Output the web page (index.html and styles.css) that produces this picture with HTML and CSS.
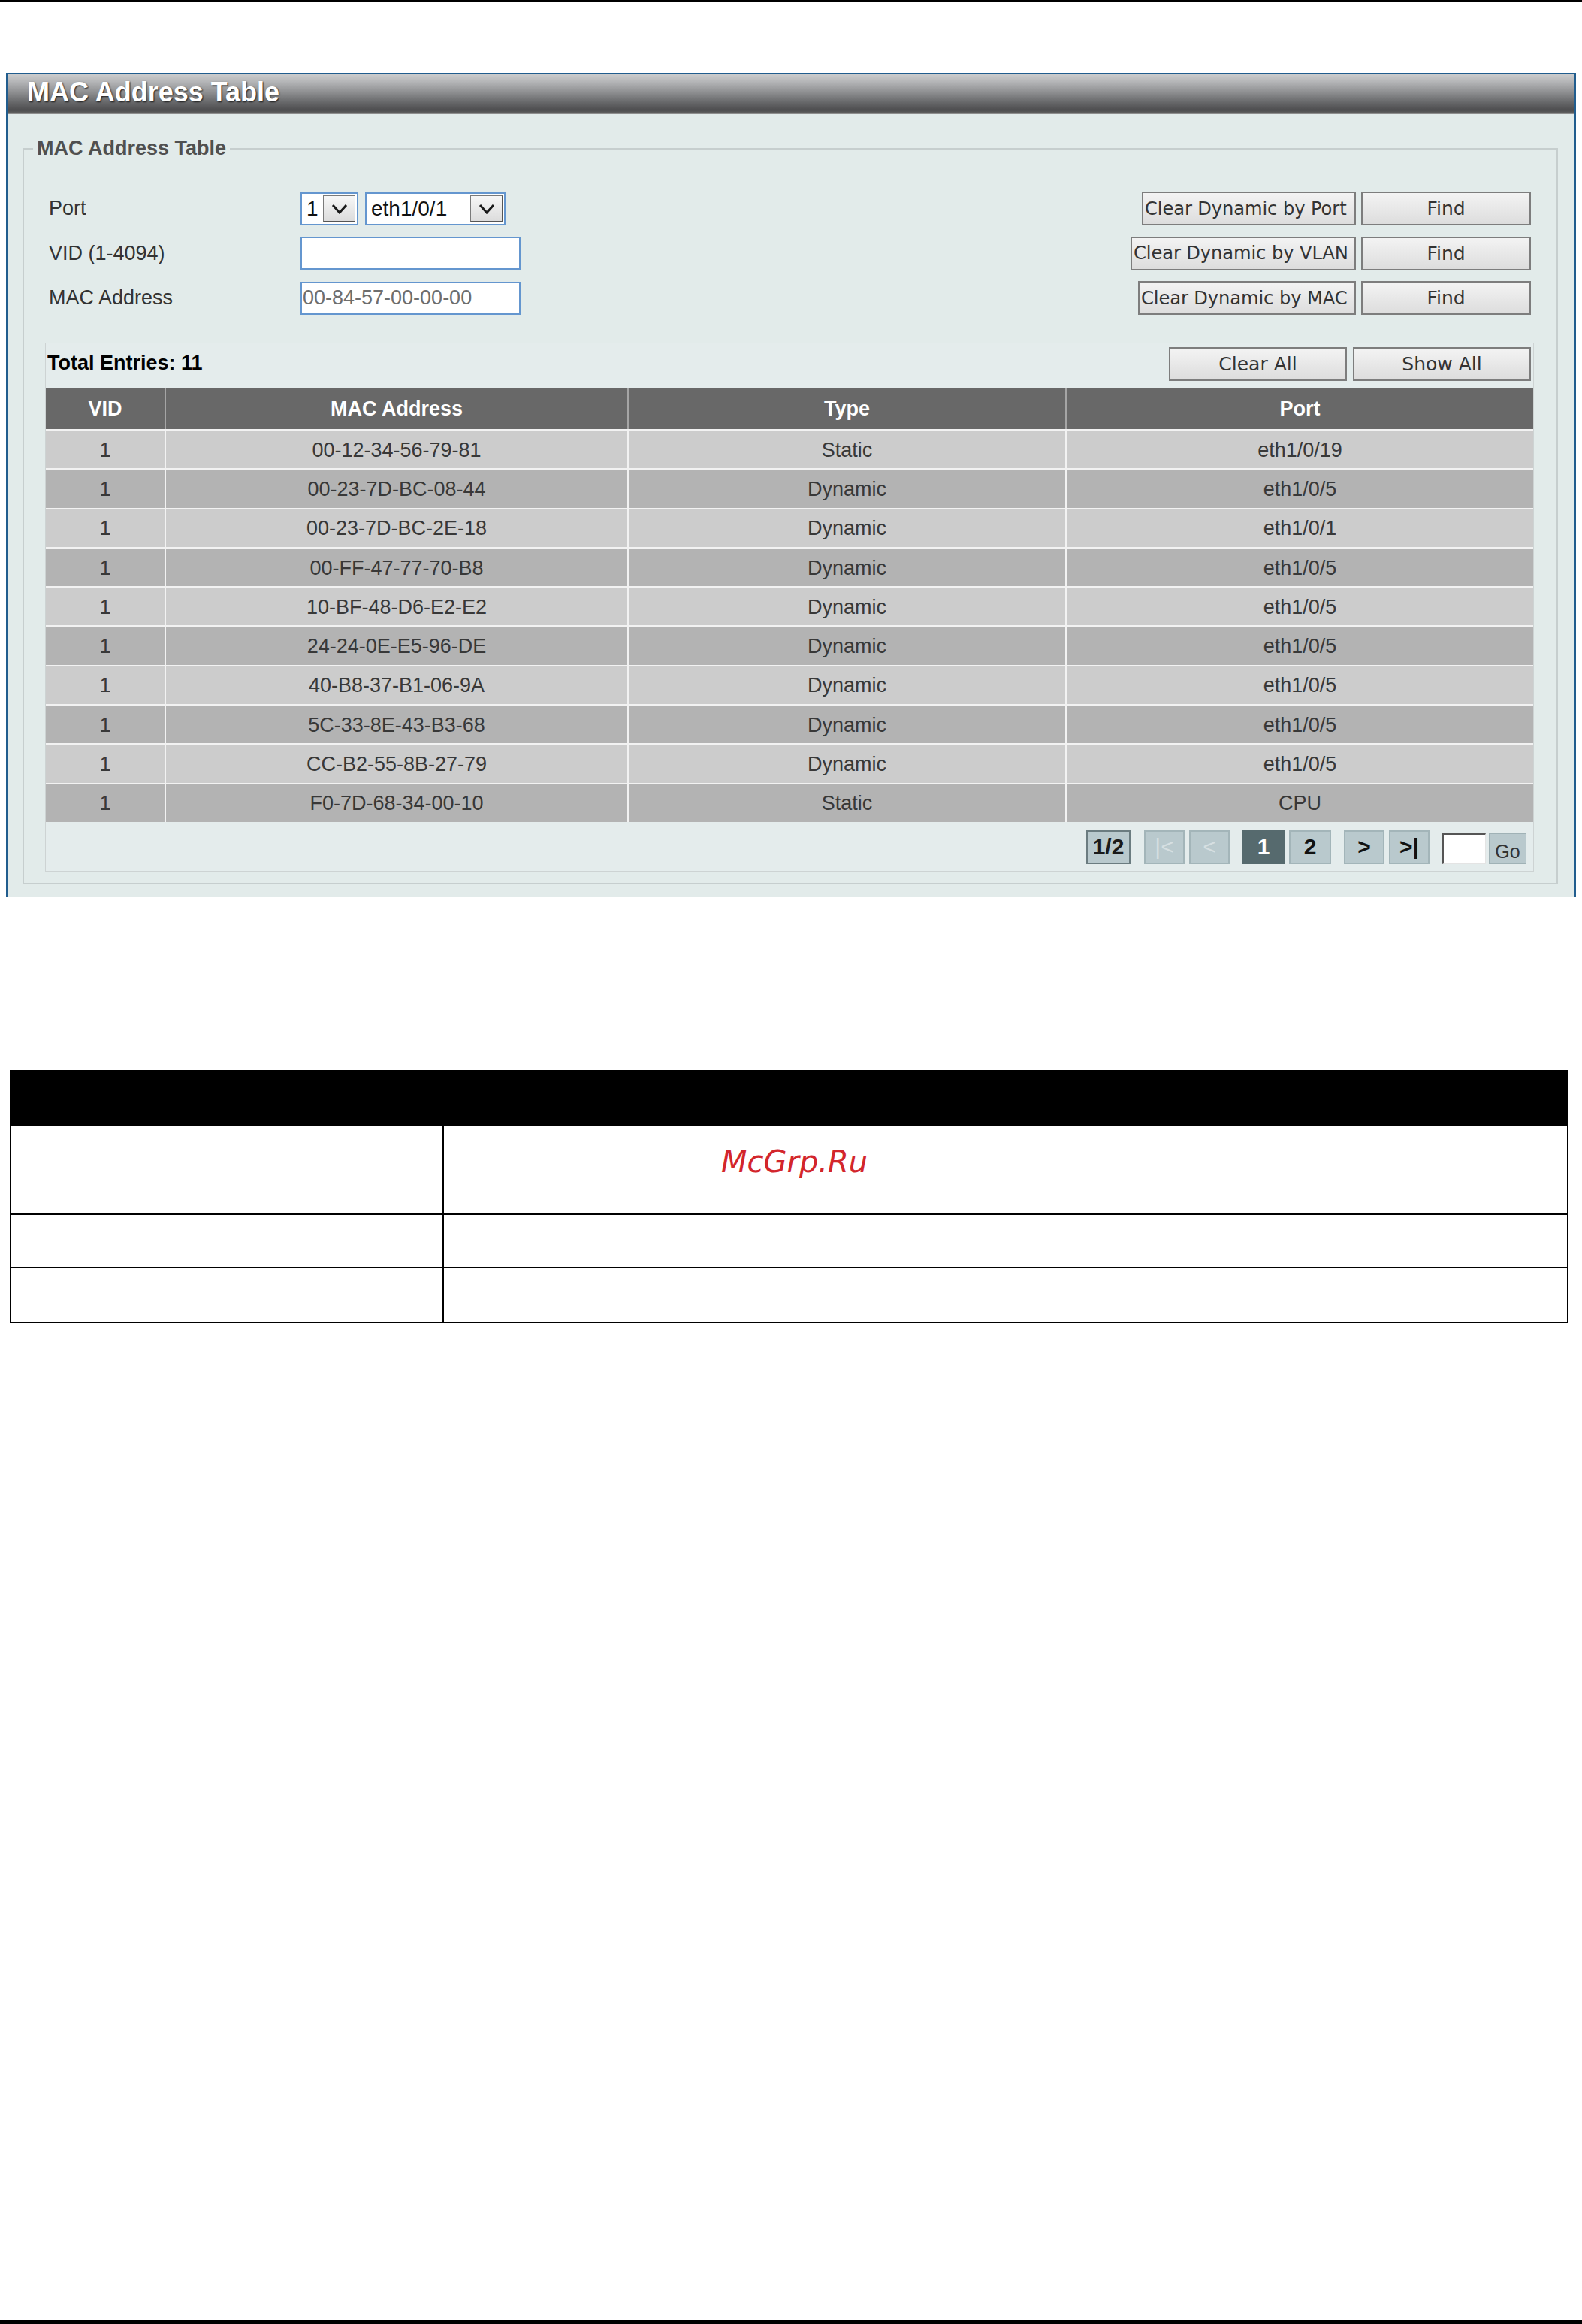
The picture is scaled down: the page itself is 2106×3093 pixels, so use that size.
FILE: index.html
```html
<!DOCTYPE html>
<html>
<head>
<meta charset="utf-8">
<title>MAC Address Table</title>
<link rel="stylesheet" href="styles.css">
</head>
<body>
<div class="topline"></div>
<div class="panel">
  <div class="titlebar">MAC Address Table</div>
  <div class="panel-body">
    <fieldset class="group">
      <legend>MAC Address Table</legend>
      <div class="form">
        <div class="form-row">
          <div class="label">Port</div>
          <div class="controls">
            <div class="select sel-unit"><span class="sel-text">1</span><span class="sel-btn"><svg width="22" height="14" viewBox="0 0 22 14"><polyline points="2,2 11,12 20,2" fill="none" stroke="#1a1a1a" stroke-width="3"/></svg></span></div>
            <div class="select sel-port"><span class="sel-text">eth1/0/1</span><span class="sel-btn"><svg width="22" height="14" viewBox="0 0 22 14"><polyline points="2,2 11,12 20,2" fill="none" stroke="#1a1a1a" stroke-width="3"/></svg></span></div>
          </div>
          <div class="actions">
            <button class="btn btn-clear w-port"><span class="clip">Clear Dynamic by Port</span></button>
            <button class="btn btn-find">Find</button>
          </div>
        </div>
        <div class="form-row">
          <div class="label">VID (1-4094)</div>
          <div class="controls">
            <input class="text-input" type="text">
          </div>
          <div class="actions">
            <button class="btn btn-clear w-vlan"><span class="clip">Clear Dynamic by VLAN</span></button>
            <button class="btn btn-find">Find</button>
          </div>
        </div>
        <div class="form-row">
          <div class="label">MAC Address</div>
          <div class="controls">
            <input class="text-input" type="text" placeholder="00-84-57-00-00-00">
          </div>
          <div class="actions">
            <button class="btn btn-clear w-mac"><span class="clip">Clear Dynamic by MAC</span></button>
            <button class="btn btn-find">Find</button>
          </div>
        </div>
      </div>

      <div class="entries-box">
        <div class="entries-head">
          <div class="total">Total Entries: 11</div>
          <div class="head-actions">
            <button class="btn btn-wide">Clear All</button>
            <button class="btn btn-wide">Show All</button>
          </div>
        </div>
        <table class="mac-table">
          <colgroup><col class="c-vid"><col class="c-mac"><col class="c-type"><col class="c-port"></colgroup>
          <thead>
            <tr><th>VID</th><th>MAC Address</th><th>Type</th><th>Port</th></tr>
          </thead>
          <tbody>
            <tr class="odd"><td>1</td><td>00-12-34-56-79-81</td><td>Static</td><td>eth1/0/19</td></tr>
            <tr class="even"><td>1</td><td>00-23-7D-BC-08-44</td><td>Dynamic</td><td>eth1/0/5</td></tr>
            <tr class="odd"><td>1</td><td>00-23-7D-BC-2E-18</td><td>Dynamic</td><td>eth1/0/1</td></tr>
            <tr class="even"><td>1</td><td>00-FF-47-77-70-B8</td><td>Dynamic</td><td>eth1/0/5</td></tr>
            <tr class="odd"><td>1</td><td>10-BF-48-D6-E2-E2</td><td>Dynamic</td><td>eth1/0/5</td></tr>
            <tr class="even"><td>1</td><td>24-24-0E-E5-96-DE</td><td>Dynamic</td><td>eth1/0/5</td></tr>
            <tr class="odd"><td>1</td><td>40-B8-37-B1-06-9A</td><td>Dynamic</td><td>eth1/0/5</td></tr>
            <tr class="even"><td>1</td><td>5C-33-8E-43-B3-68</td><td>Dynamic</td><td>eth1/0/5</td></tr>
            <tr class="odd"><td>1</td><td>CC-B2-55-8B-27-79</td><td>Dynamic</td><td>eth1/0/5</td></tr>
            <tr class="even"><td>1</td><td>F0-7D-68-34-00-10</td><td>Static</td><td>CPU</td></tr>
          </tbody>
        </table>
        <div class="pager">
          <span class="pg pg-count">1/2</span>
          <span class="pg pg-nav pg-off pg-first">|&lt;</span>
          <span class="pg pg-nav pg-off">&lt;</span>
          <span class="pg pg-num pg-active pg-group">1</span>
          <span class="pg pg-num">2</span>
          <span class="pg pg-nav pg-group">&gt;</span>
          <span class="pg pg-nav">&gt;|</span>
          <input class="pg-input pg-group" type="text">
          <button class="pg-go">Go</button>
        </div>
      </div>
    </fieldset>
  </div>
</div>

<table class="doc-table">
  <colgroup><col class="d-c1"><col class="d-c2"></colgroup>
  <thead><tr><th></th><th></th></tr></thead>
  <tbody>
    <tr class="d-r1"><td></td><td class="wm-cell"><span class="watermark">McGrp.Ru</span></td></tr>
    <tr class="d-r2"><td></td><td></td></tr>
    <tr class="d-r3"><td></td><td></td></tr>
  </tbody>
</table>

<div class="bottomline"></div>
</body>
</html>
```

FILE: styles.css
```css
* {
  box-sizing: border-box;
}

html,
body {
  margin: 0;
  padding: 0;
}

body {
  background: #ffffff;
  font-family: "Liberation Sans", Arial, sans-serif;
  min-height: 3093px;
  display: flex;
  flex-direction: column;
}

.topline {
  flex: none;
  height: 3px;
  background: #000000;
}

/* ---------- panel ---------- */
.panel {
  flex: none;
  margin: 94px 8px 0 8px;
  border: 2px solid #215d8e;
  border-bottom: none;
  background: #e2ebea;
}

.titlebar {
  height: 53px;
  line-height: 48px;
  padding-left: 26px;
  color: #ffffff;
  font-size: 36px;
  font-weight: bold;
  text-shadow: 1px 1px 2px #1a1a1a;
  background: linear-gradient(to bottom, #cbcccd 0%, #b5b6b8 18%, #8e8f91 45%, #67686a 70%, #4d4d4f 90%, #595959 95%, #9a9a9a 100%);
}

.panel-body {
  padding: 30px 22px 17px 20px;
}

.group {
  margin: 0;
  padding: 42px 0 15px 0;
  min-width: 0;
  border: 2px solid #c6cece;
}

.group legend {
  margin-left: 12px;
  padding: 0 5px;
  font-size: 27px;
  line-height: 31px;
  font-weight: bold;
  color: #505050;
}

/* ---------- form ---------- */
.form {
  padding: 0 34px 0 33px;
}

.form-row {
  display: flex;
  align-items: center;
  height: 45px;
  margin-bottom: 14.5px;
}

.form-row:last-child {
  margin-bottom: 0;
}

.label {
  flex: none;
  width: 335px;
  font-size: 27px;
  color: #333333;
}

.controls {
  flex: 1;
  display: flex;
  align-items: center;
  gap: 9px;
}

.actions {
  flex: none;
  display: flex;
  align-items: center;
  gap: 7px;
}

.select {
  height: 44px;
  display: flex;
  align-items: center;
  border: 2px solid #6496cf;
  background: #ffffff;
}

.sel-unit {
  width: 77px;
}

.sel-port {
  width: 187px;
}

.sel-text {
  flex: 1;
  padding-left: 6px;
  font-size: 28px;
  color: #111111;
  white-space: nowrap;
}

.sel-btn {
  flex: none;
  width: 43px;
  height: 35px;
  margin-right: 2px;
  display: flex;
  align-items: center;
  justify-content: center;
  border: 1px solid #7a7a7a;
  border-right-color: #555555;
  border-bottom-color: #555555;
  background: linear-gradient(to bottom, #f7f7f7, #dcdcdc);
}

.text-input {
  width: 293px;
  height: 44px;
  margin: 0;
  padding: 0 0 0 1px;
  border: 2px solid #6496cf;
  background: #ffffff;
  font-family: "Liberation Sans", Arial, sans-serif;
  font-size: 27px;
  color: #111111;
  outline: none;
}

.text-input::placeholder {
  color: #6e6e6e;
}

/* ---------- buttons ---------- */
.btn {
  margin: 0;
  padding: 0;
  height: 45px;
  border: 2px solid #7d7d7d;
  background: linear-gradient(to bottom, #f3f3f3, #dddddd);
  font-family: "DejaVu Sans", Verdana, sans-serif;
  font-size: 25px;
  color: #333333;
}

.btn-clear {
  text-align: left;
  font-size: 24.2px;
  letter-spacing: -0.1px;
}

.clip {
  display: block;
  white-space: nowrap;
  padding-left: 2px;
}

.w-port {
  width: 285px;
}

.w-vlan {
  width: 300px;
}

.w-mac {
  width: 290px;
}

.btn-find {
  width: 226px;
}

.btn-wide {
  width: 237px;
}

/* ---------- entries box ---------- */
.entries-box {
  margin: 37px 30px 0 28px;
  border: 1px solid #cdd3d3;
  background: #e4ecec;
}

.entries-head {
  height: 59px;
  display: flex;
  align-items: flex-start;
  justify-content: space-between;
  padding: 5px 3px 0 2px;
}

.total {
  font-size: 27px;
  font-weight: bold;
  color: #000000;
  line-height: 42px;
}

.head-actions {
  display: flex;
  gap: 8px;
}

.mac-table {
  width: 100%;
  border-collapse: separate;
  border-spacing: 0;
  table-layout: fixed;
  font-size: 27px;
}

.c-vid {
  width: 158px;
}

.c-mac {
  width: 616px;
}

.c-type {
  width: 583px;
}

.c-port {
  width: 623px;
}

.mac-table th {
  height: 55px;
  padding: 2px 0 0 0;
  background: #686868;
  color: #ffffff;
  font-weight: bold;
  text-align: center;
  border-left: 2px solid #a5a5a5;
}

.mac-table th:first-child {
  border-left: none;
}

.mac-table td {
  height: 52.3px;
  padding: 2px 0 0 0;
  text-align: center;
  color: #383838;
  border-top: 2px solid #f2f2f2;
  border-left: 2px solid #f2f2f2;
}

.mac-table td:first-child {
  border-left: none;
}

.mac-table tr.odd td {
  background: #cccccc;
}

.mac-table tr.even td {
  background: #b3b3b3;
}

/* ---------- pager ---------- */
.pager {
  height: 65px;
  display: flex;
  justify-content: flex-end;
  align-items: flex-start;
  padding: 11px 9px 0 0;
}

.pg {
  height: 45px;
  margin-left: 6px;
  display: flex;
  align-items: center;
  justify-content: center;
  border: 2px solid #a3b5b9;
  background: #b9c9cd;
  font-size: 30px;
  font-weight: bold;
  color: #111111;
}

.pg-count {
  width: 59px;
  margin-left: 0;
  border-color: #6b7c80;
  color: #1a1a1a;
}

.pg-nav {
  width: 54px;
}

.pg-first {
  margin-left: 18px;
}

.pg-num {
  width: 56px;
}

.pg-group {
  margin-left: 17px;
}

.pg-off {
  color: #d6dfe1;
  font-weight: normal;
}

.pg-active {
  background: #566a6e;
  border-color: #566a6e;
  color: #ffffff;
}

.pg-input {
  width: 58px;
  height: 41px;
  margin-top: 4px;
  padding: 0;
  border-style: solid;
  border-width: 2px 1px 1px 2px;
  border-color: #555555 #e4e4e4 #e4e4e4 #555555;
  background: #ffffff;
  outline: none;
}

.pg-go {
  width: 50px;
  height: 41px;
  margin: 4px 0 0 4px;
  padding: 8px 0 0 0;
  border: 1px solid #a0b2b6;
  background: #b9c9cd;
  font-family: "Liberation Sans", Arial, sans-serif;
  font-size: 25px;
  color: #333333;
}

/* ---------- document table ---------- */
.doc-table {
  flex: none;
  align-self: flex-start;
  margin: 230px 0 0 13px;
  width: 2073px;
  border-collapse: collapse;
  table-layout: fixed;
}

.d-c1 {
  width: 576px;
}

.d-c2 {
  width: 1497px;
}

.doc-table th {
  height: 73px;
  padding: 0;
  background: #000000;
  border: 2px solid #000000;
}

.doc-table td {
  padding: 0;
  border: 2px solid #000000;
  vertical-align: top;
}

.d-r1 td {
  height: 118px;
}

.d-r2 td {
  height: 71px;
}

.d-r3 td {
  height: 73px;
}

.doc-table td.wm-cell {
  padding: 24px 0 0 369px;
}

.watermark {
  display: block;
  font-family: "DejaVu Sans", sans-serif;
  font-style: italic;
  font-size: 40px;
  line-height: 46px;
  color: #d3262c;
}

.bottomline {
  flex: none;
  margin-top: auto;
  height: 5px;
  background: #000000;
}
```
